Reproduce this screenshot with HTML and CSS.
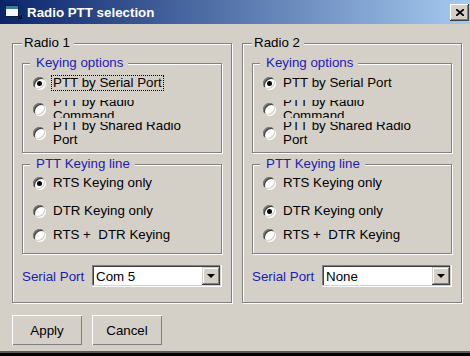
FILE: index.html
```html
<!DOCTYPE html>
<html>
<head>
<meta charset="utf-8">
<link rel="stylesheet" href="styles.css">
</head>
<body>
<div class="window">
  <div class="titlebar">
    <svg class="app-icon" width="17" height="14" viewBox="0 0 17 14">
      <rect x="0.5" y="0.5" width="13" height="11" fill="#f2f7fb" stroke="#0b1e3a"/>
      <rect x="1" y="1" width="12" height="3" fill="#3c7a96"/>
      <path d="M13.5 10.5 L16 13 M13 13.5 H16.5 V10" stroke="#000" fill="none"/>
    </svg>
    <span class="title">Radio PTT selection</span>
    <div class="close-btn">
      <svg width="8" height="7" viewBox="0 0 8 7"><path d="M0 0L8 7M8 0L0 7" stroke="#000" stroke-width="1.7"/></svg>
    </div>
  </div>
  <div class="content">
    <div class="radios">
      <div class="group outer">
        <span class="legend">Radio 1</span>
        <div class="group inner keying">
          <span class="legend">Keying options</span>
          <div class="opt k1"><span class="radio on"></span><span class="lbl focus">PTT by Serial Port</span></div>
          <div class="opt k2"><span class="radio"></span><span class="lbl clip c20"><span>PTT by Radio Command</span></span></div>
          <div class="opt k3"><span class="radio"></span><span class="lbl clip c24"><span>PTT by Shared Radio Port</span></span></div>
        </div>
        <div class="group inner ptt">
          <span class="legend">PTT Keying line</span>
          <div class="opt p1"><span class="radio on"></span><span class="lbl">RTS Keying only</span></div>
          <div class="opt p2"><span class="radio"></span><span class="lbl">DTR Keying only</span></div>
          <div class="opt p3"><span class="radio"></span><span class="lbl">RTS +&nbsp; DTR Keying</span></div>
        </div>
        <div class="port-row">
          <span class="port-label">Serial Port</span>
          <div class="combo"><span class="val">Com 5</span><span class="drop"></span></div>
        </div>
      </div>
      <div class="group outer">
        <span class="legend">Radio 2</span>
        <div class="group inner keying">
          <span class="legend">Keying options</span>
          <div class="opt k1"><span class="radio on"></span><span class="lbl">PTT by Serial Port</span></div>
          <div class="opt k2"><span class="radio"></span><span class="lbl clip c20"><span>PTT by Radio Command</span></span></div>
          <div class="opt k3"><span class="radio"></span><span class="lbl clip c24"><span>PTT by Shared Radio Port</span></span></div>
        </div>
        <div class="group inner ptt">
          <span class="legend">PTT Keying line</span>
          <div class="opt p1"><span class="radio"></span><span class="lbl">RTS Keying only</span></div>
          <div class="opt p2"><span class="radio on"></span><span class="lbl">DTR Keying only</span></div>
          <div class="opt p3"><span class="radio"></span><span class="lbl">RTS +&nbsp; DTR Keying</span></div>
        </div>
        <div class="port-row">
          <span class="port-label">Serial Port</span>
          <div class="combo"><span class="val">None</span><span class="drop"></span></div>
        </div>
      </div>
    </div>
    <div class="buttons">
      <button class="btn">Apply</button>
      <button class="btn">Cancel</button>
    </div>
  </div>
  <div class="edge"></div>
</div>
</body>
</html>
```
FILE: styles.css
```css
* { box-sizing: border-box; }
html, body { margin: 0; padding: 0; }
body {
  width: 470px;
  height: 356px;
  overflow: hidden;
  background: #d4d0c8;
  font-family: "Liberation Sans", Arial, sans-serif;
  font-size: 13.33px;
  color: #000;
}
.window { display: flex; flex-direction: column; height: 356px; }

.titlebar {
  height: 24px;
  flex: none;
  display: flex;
  align-items: center;
  padding-left: 5px;
  background: linear-gradient(to right, #0a246a, #a6caf0);
}
.app-icon { flex: none; margin-right: 5px; }
.title { color: #fff; font-weight: bold; flex: 1; }
.close-btn {
  width: 19px;
  height: 17px;
  align-self: flex-start;
  margin-top: 4px;
  margin-right: 1px;
  background: #d4d0c8;
  box-shadow: inset -1px -1px #404040, inset 1px 1px #fff, inset -2px -2px #808080;
  display: flex;
  align-items: center;
  justify-content: center;
}

.content { flex: 1; padding: 19px 0 0 12px; }
.radios { display: flex; gap: 10px; }

.group {
  position: relative;
  border: 1px solid #808080;
  box-shadow: inset 1px 1px #fff, 1px 1px #fff;
}
.outer { width: 220px; height: 260px; padding: 19px 0 0 9px; }
.inner { width: 200px; height: 90px; }
.keying { padding: 7px 0 0 10px; }
.ptt { margin-top: 11px; padding: 6px 0 0 10px; }

.legend {
  position: absolute;
  top: -8px;
  line-height: 14px;
  background: #d4d0c8;
  white-space: nowrap;
}
.outer > .legend { left: 9px; padding: 0 4px 0 2px; }
.inner > .legend { left: 7px; padding: 0 5px 0 6px; color: #1c1cb4; }

.opt { display: flex; align-items: center; height: 24px; }
.k2 { margin-top: 2px; }
.p2 { margin-top: 4px; }

.radio {
  position: relative;
  flex: none;
  width: 13px;
  height: 13px;
  margin-right: 5px;
  border-radius: 50%;
  background: #fff;
  box-shadow: inset -1px -1px #fff, inset -2px -2px #d4d0c8, inset 1px 1px #808080, inset 2px 2px #404040;
}
.radio.on::after {
  content: "";
  position: absolute;
  left: 4px;
  top: 4px;
  width: 5px;
  height: 5px;
  border-radius: 50%;
  background: #000;
}

.lbl {
  padding: 0 1px;
  border: 1px solid transparent;
  line-height: 14px;
  white-space: nowrap;
}
.lbl.focus { border: 1px dotted #000; }
.lbl.clip {
  display: flex;
  align-items: center;
  width: 136px;
  overflow: hidden;
  white-space: normal;
}
.lbl.clip > span { display: block; }
.c20 { height: 20px; }
.c24 { height: 24px; }

.port-row { display: flex; align-items: center; margin-top: 11px; }
.port-label { width: 70px; color: #1c1cb4; }
.combo {
  width: 130px;
  height: 22px;
  padding: 2px;
  display: flex;
  align-items: center;
  background: #fff;
  box-shadow: inset -1px -1px #fff, inset -2px -2px #d4d0c8, inset 1px 1px #808080, inset 2px 2px #404040;
}
.combo .val { flex: 1; padding-left: 2px; }
.drop {
  width: 18px;
  height: 18px;
  display: flex;
  align-items: center;
  justify-content: center;
  background: #d4d0c8;
  box-shadow: inset -1px -1px #404040, inset 1px 1px #d4d0c8, inset -2px -2px #808080, inset 2px 2px #fff;
}
.drop::after {
  content: "";
  border-left: 4px solid transparent;
  border-right: 4px solid transparent;
  border-top: 4px solid #000;
}

.buttons { display: flex; gap: 10px; margin-top: 12px; }
.btn {
  width: 70px;
  height: 30px;
  padding: 0;
  border: none;
  font: inherit;
  color: #000;
  background: #d4d0c8;
  box-shadow: inset 1px 1px #fff, inset -1px -1px #808080;
}

.edge {
  height: 5px;
  flex: none;
  border-top: 2px solid #5a5a5a;
  background: #000;
}
```
